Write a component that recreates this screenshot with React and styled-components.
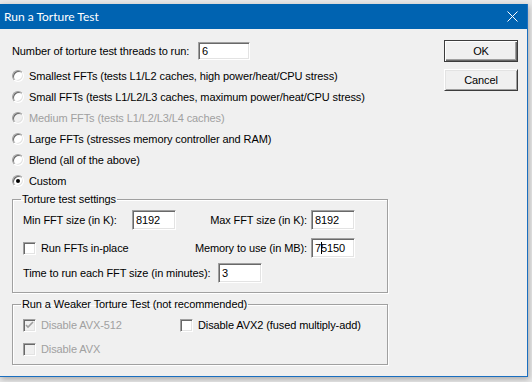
import React from "react";
import styled, { createGlobalStyle } from "styled-components";

const GlobalStyle = createGlobalStyle`
  html, body {
    margin: 0;
    padding: 0;
    background: #e8e8e8;
  }
  body {
    width: 532px;
    height: 382px;
    overflow: hidden;
    font-family: "Liberation Sans", Arial, sans-serif;
    font-size: 11px;
    letter-spacing: -0.1px;
    color: #000;
  }
`;

const StyledWindow = styled.div`
  margin-top: 4px;
  width: 527px;
  height: 372px;
  border-right: 1px solid #1a6fc0;
  border-bottom: 1px solid #1a6fc0;
  background: #f0f0f0;
  display: flex;
  flex-direction: column;
  box-shadow: 1px 2px 6px rgba(0, 0, 0, 0.28);
`;

const StyledTitleBar = styled.div`
  height: 25px;
  flex-shrink: 0;
  background: #0063b1;
  color: #fff;
  display: flex;
  align-items: center;
  justify-content: space-between;
  padding: 0 9px 0 4px;
  font-family: Lato, "Noto Sans", sans-serif;
  font-size: 12px;
  letter-spacing: 0;
`;

const StyledBody = styled.div`
  flex: 1;
  display: flex;
  padding: 11px 0 0 12px;
`;

const StyledLeft = styled.div`
  width: 376px;
  display: flex;
  flex-direction: column;
`;

const StyledRight = styled.div`
  margin-left: 56px;
  display: flex;
  flex-direction: column;
  gap: 7px;
`;

const StyledButton = styled.div`
  width: 74px;
  height: 22px;
  box-sizing: border-box;
  display: flex;
  align-items: center;
  justify-content: center;
  background: #f0f0f0;
  border: 1px solid ${(p) => (p.$default ? "#3c3c3c" : "#ffffff")};
  border-right-color: #3c3c3c;
  border-bottom-color: #3c3c3c;
  box-shadow: ${(p) =>
    p.$default
      ? "inset 1px 1px 0 #fff, inset -1px -1px 0 #696969, inset -2px -2px 0 #a0a0a0"
      : "inset 1px 1px 0 #e3e3e3, inset -1px -1px 0 #a0a0a0"};
`;

const StyledRow = styled.div`
  display: flex;
  align-items: center;
  white-space: nowrap;
  flex-shrink: 0;
  width: ${(p) => (p.$w ? `${p.$w}px` : "auto")};
  height: ${(p) => p.$h || 21}px;
  margin-top: ${(p) => p.$mt || 0}px;
  color: ${(p) => (p.$disabled ? "#a0a0a0" : "#000")};
`;

const StyledLabel = styled.span`
  width: ${(p) => (p.$w ? `${p.$w}px` : "auto")};
  flex: ${(p) => (p.$grow ? 1 : "none")};
  text-align: ${(p) => (p.$right ? "right" : "left")};
  padding-right: ${(p) => (p.$right ? 4 : 0)}px;
  white-space: nowrap;
`;

const StyledEdit = styled.div`
  width: ${(p) => p.$w || 44}px;
  height: ${(p) => p.$h || 20}px;
  box-sizing: border-box;
  background: #fff;
  border: 1px solid #a0a0a0;
  border-right-color: #fff;
  border-bottom-color: #fff;
  box-shadow: inset 1px 1px 0 #696969, inset -1px -1px 0 #e3e3e3;
  padding-left: 3px;
  display: flex;
  align-items: center;
  flex-shrink: 0;
`;

const StyledIBeam = styled.span`
  display: inline-block;
  width: 1px;
  height: 12px;
  margin: 0 -1px 0 0;
  background: #000;
`;

const StyledRadio = styled.span`
  width: 12px;
  height: 12px;
  box-sizing: border-box;
  border-radius: 50%;
  flex-shrink: 0;
  margin-right: 5px;
  background: ${(p) => (p.$disabled ? "#f0f0f0" : "#fff")};
  border: 1px solid #a0a0a0;
  border-right-color: #fff;
  border-bottom-color: #fff;
  box-shadow: inset 1px 1px 0 #696969, inset -1px -1px 0 #e3e3e3;
  display: flex;
  align-items: center;
  justify-content: center;
  &::after {
    content: "";
    width: 4px;
    height: 4px;
    border-radius: 50%;
    background: ${(p) => (p.$checked ? "#000" : "transparent")};
  }
`;

const StyledCheck = styled.span`
  width: 13px;
  height: 13px;
  box-sizing: border-box;
  flex-shrink: 0;
  margin-right: 5px;
  background: ${(p) => (p.$disabled ? "#f0f0f0" : "#fff")};
  border: 1px solid #a0a0a0;
  border-right-color: #fff;
  border-bottom-color: #fff;
  box-shadow: inset 1px 1px 0 #696969, inset -1px -1px 0 #e3e3e3;
  display: flex;
  align-items: center;
  justify-content: center;
`;

const StyledGroup = styled.fieldset`
  margin: ${(p) => p.$mt || 0}px 0 0 0;
  padding: 0 32px 0 10px;
  height: ${(p) => p.$h}px;
  box-sizing: border-box;
  border: 1px solid #a0a0a0;
  box-shadow: 1px 1px 0 #fff, inset 1px 1px 0 #fff;
  min-width: 0;
`;

const StyledLegend = styled.legend`
  padding: 0 1px;
  margin-left: -2px;
  line-height: 13px;
`;

const Radio = ({ label, checked, disabled }) => (
  <StyledRow $disabled={disabled}>
    <StyledRadio $checked={checked} $disabled={disabled} />
    {label}
  </StyledRow>
);

const Check = ({ checked, disabled, children }) => (
  <>
    <StyledCheck $disabled={disabled}>
      {checked && (
        <svg width="9" height="9" viewBox="0 0 9 9">
          <polyline
            points="1,4 3,6 8,1"
            fill="none"
            stroke={disabled ? "#a0a0a0" : "#000"}
            strokeWidth="1.6"
          />
        </svg>
      )}
    </StyledCheck>
    {children}
  </>
);

export default function App() {
  return (
    <>
      <GlobalStyle />
      <StyledWindow>
        <StyledTitleBar>
          <span>Run a Torture Test</span>
          <svg width="11" height="11" viewBox="0 0 11 11">
            <path d="M0.5 0.5 L10.5 10.5 M10.5 0.5 L0.5 10.5" stroke="#fff" strokeWidth="1" />
          </svg>
        </StyledTitleBar>
        <StyledBody>
          <StyledLeft>
            <StyledRow $h={18} $mt={2}>
              <StyledLabel $w={186}>Number of torture test threads to run:</StyledLabel>
              <StyledEdit $w={52} $h={18}>6</StyledEdit>
            </StyledRow>
            <StyledRow $h={5} />
            <Radio label="Smallest FFTs (tests L1/L2 caches, high power/heat/CPU stress)" />
            <Radio label="Small FFTs (tests L1/L2/L3 caches, maximum power/heat/CPU stress)" />
            <Radio label="Medium FFTs (tests L1/L2/L3/L4 caches)" disabled />
            <Radio label="Large FFTs (stresses memory controller and RAM)" />
            <Radio label="Blend (all of the above)" />
            <Radio label="Custom" checked />
            <StyledGroup $mt={2} $h={100}>
              <StyledLegend>Torture test settings</StyledLegend>
              <StyledRow $h={20} $mt={4}>
                <StyledLabel $w={109}>Min FFT size (in K):</StyledLabel>
                <StyledEdit>8192</StyledEdit>
                <StyledLabel $grow $right>Max FFT size (in K):</StyledLabel>
                <StyledEdit>8192</StyledEdit>
              </StyledRow>
              <StyledRow $h={20} $mt={8}>
                <Check>Run FFTs in-place</Check>
                <StyledLabel $grow $right>Memory to use (in MB):</StyledLabel>
                <StyledEdit>
                  7<StyledIBeam />5150
                </StyledEdit>
              </StyledRow>
              <StyledRow $h={20} $mt={5}>
                <StyledLabel $w={195}>Time to run each FFT size (in minutes):</StyledLabel>
                <StyledEdit>3</StyledEdit>
              </StyledRow>
            </StyledGroup>
            <StyledGroup $mt={5} $h={67}>
              <StyledLegend>Run a Weaker Torture Test (not recommended)</StyledLegend>
              <StyledRow $h={16} $mt={6}>
                <StyledRow $h={16} $w={157} $disabled>
                  <Check checked disabled>Disable AVX-512</Check>
                </StyledRow>
                <Check>Disable AVX2 (fused multiply-add)</Check>
              </StyledRow>
              <StyledRow $h={16} $mt={8} $disabled>
                <Check disabled>Disable AVX</Check>
              </StyledRow>
            </StyledGroup>
          </StyledLeft>
          <StyledRight>
            <StyledButton $default>OK</StyledButton>
            <StyledButton>Cancel</StyledButton>
          </StyledRight>
        </StyledBody>
      </StyledWindow>
    </>
  );
}
